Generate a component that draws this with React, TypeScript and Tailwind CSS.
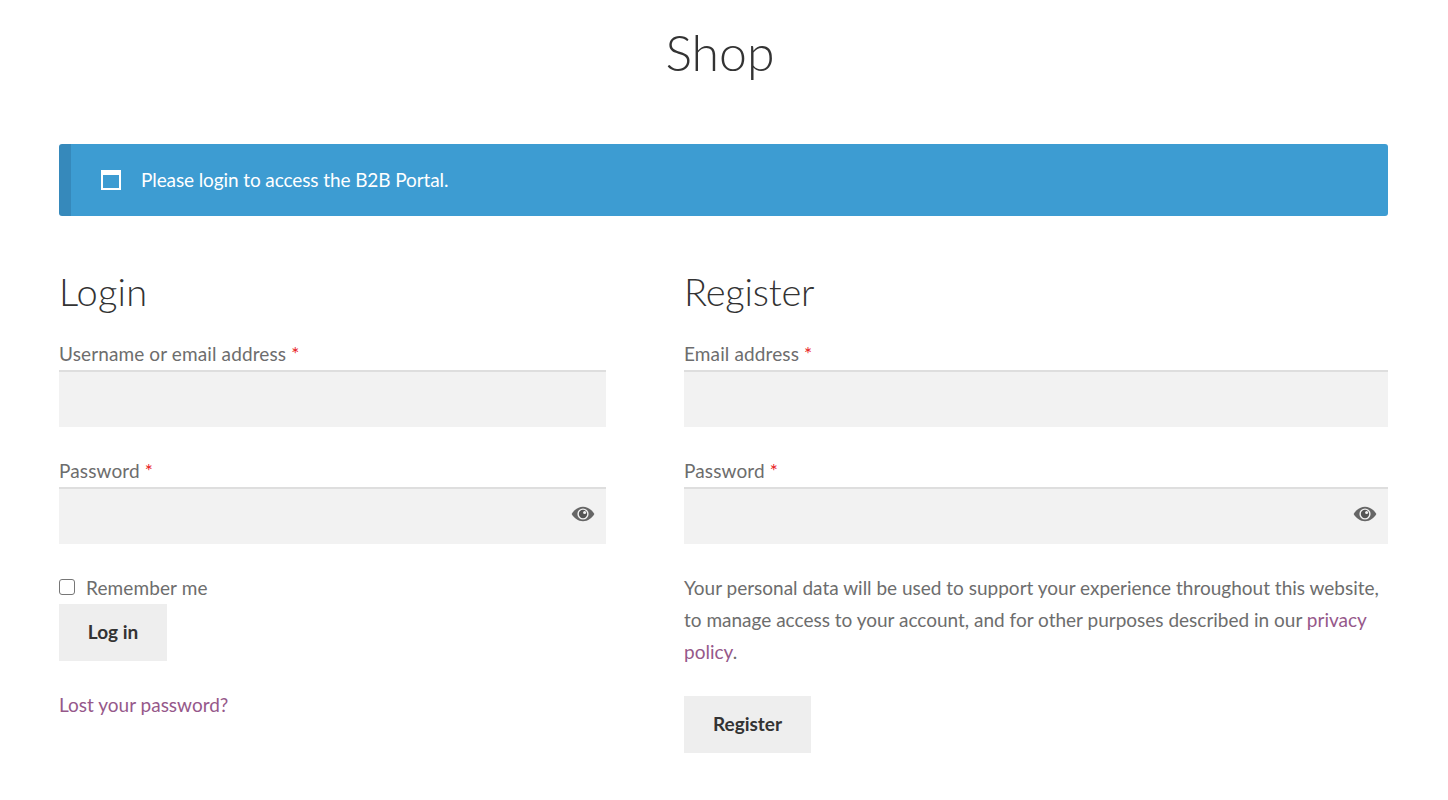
import React from "react";

function Eye() {
  return (
    <svg width="24" height="16" viewBox="0 0 24 16" aria-hidden="true">
      <path d="M12 .8C7 .8 3 4 .6 8c2.400 4 6.400 7.200 11.400 7.200S21 12 23.400 8C21 4 17 .8 12 .8z" fill="#666" />
      <circle cx="12" cy="8" r="5.600" fill="#f2f2f2" />
      <circle cx="12" cy="8" r="4.200" fill="#555" />
      <circle cx="13.600" cy="6.400" r="1.500" fill="#f2f2f2" />
    </svg>
  );
}

function Label({ text }: { text: string }) {
  return (
    <label className="block h-[26px] leading-[20px] tracking-[0.12px] text-[19px]">
      {text} <span className="text-[#e8201c]">*</span>
    </label>
  );
}

function Field({ eye }: { eye?: boolean }) {
  return (
    <div className="relative h-[57px] bg-[#f2f2f2] border-t-2 border-[#dedede]">
      {eye && (
        <span className="absolute right-[11px] top-[17px] flex">
          <Eye />
        </span>
      )}
    </div>
  );
}

function Btn({ text, w }: { text: string; w: string }) {
  return (
    <button className={`block h-[57px] ${w} bg-[#eeeeee] text-[#333333] text-[19px] font-bold`}>
      {text}
    </button>
  );
}

export default function App() {
  return (
    <div className="min-h-[800px] bg-white pl-[59px] pr-[60px] text-[#6d6d6d] [font-family:Lato,sans-serif]">
      <h1 className="h-[144px] pt-[18px] pr-[7px] text-center text-[50px] leading-[68px] font-light text-[#333333]">Shop</h1>

      <div className="flex h-[72px] items-center rounded-[3px] overflow-hidden bg-[#3d9cd2] text-white border-l-[12px] border-[#3689bb] text-[19px]">
        <svg width="20" height="20" viewBox="0 0 20 20" className="ml-[30px]" aria-hidden="true">
          <rect x="0" y="0" width="20" height="20" fill="#fff" />
          <rect x="2" y="5" width="16" height="13" fill="#3d9cd2" />
        </svg>
        <span className="ml-[20px] tracking-[-0.1px]">Please login to access the B2B Portal.</span>
      </div>

      <div className="flex gap-[78px] pt-[49px]">
        <div className="w-[547px]">
          <h2 className="h-[57px] text-[38px] leading-[52px] font-light text-[#333333] tracking-[0.2px]">Login</h2>
          <div className="pt-[22px]">
            <Label text="Username or email address" />
            <Field />
          </div>
          <div className="pt-[34px]">
            <Label text="Password" />
            <Field eye />
          </div>
          <div className="flex h-[60px] items-end">
            <label className="flex h-[30px] items-center text-[19px] pb-px">
              <input type="checkbox" className="h-4 w-4 -translate-y-[2px] appearance-none rounded-[3px] border border-[#767676] bg-white" />
              <span className="ml-[11px] tracking-[0.12px]">Remember me</span>
            </label>
          </div>
          <Btn text="Log in" w="w-[108px]" />
          <a className="mt-[31px] block text-[19px] leading-[26px] text-[#96588a]">Lost your password?</a>
        </div>

        <div className="w-[704px]">
          <h2 className="h-[57px] text-[38px] leading-[52px] font-light text-[#333333] tracking-[-0.2px]">Register</h2>
          <div className="pt-[22px]">
            <Label text="Email address" />
            <Field />
          </div>
          <div className="pt-[34px]">
            <Label text="Password" />
            <Field eye />
          </div>
          <p className="pt-[28px] text-[19px] leading-[32px]">
            Your personal data will be used to support your experience throughout this website, to manage access to your account, and for other purposes described in our <a className="text-[#96588a]">privacy policy</a>.
          </p>
          <div className="pt-[28px]">
            <Btn text="Register" w="w-[127px]" />
          </div>
        </div>
      </div>
    </div>
  );
}
